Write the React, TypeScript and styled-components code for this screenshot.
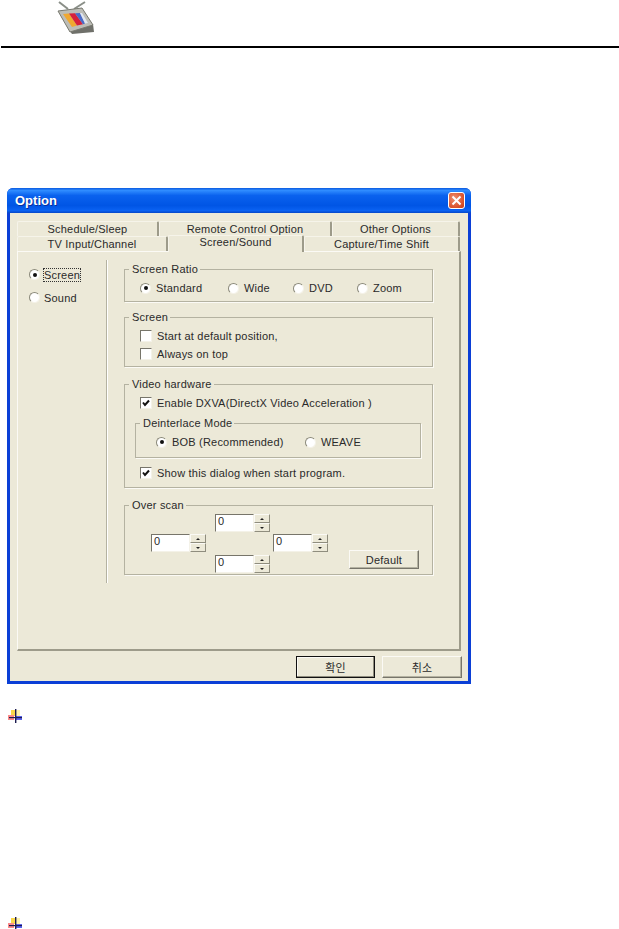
import React from 'react';
import styled, { createGlobalStyle } from 'styled-components';

const FACE = '#ece9d8';

const GlobalStyle = createGlobalStyle`
  html, body {
    margin: 0;
    padding: 0;
    background: #fff;
  }
  body {
    font-family: "Liberation Sans", Arial, "Noto Sans CJK KR", sans-serif;
    font-size: 11px;
    color: #2a2a2a;
    letter-spacing: 0.2px;
  }
`;

const Page = styled.div`
  width: 619px;
  height: 929px;
  overflow: hidden;
`;

const Header = styled.header`
  height: 46px;
  margin-left: 1px;
  padding-left: 55px;
  border-bottom: 2px solid #000;
`;

const Dialog = styled.section`
  width: 464px;
  height: 496px;
  margin: 140px 0 0 7px;
  box-sizing: border-box;
  display: flex;
  flex-direction: column;
  background: #0b3fd6;
  border-radius: 6px 6px 0 0;
  padding: 0 3px 3px;
`;

const TitleBar = styled.div`
  height: 25px;
  flex: none;
  margin: 0 -3px;
  padding: 0 6px 0 8px;
  display: flex;
  align-items: center;
  justify-content: space-between;
  border-radius: 6px 6px 0 0;
  background: linear-gradient(180deg, #0a5ae0 0%, #2f8cff 10%, #0a62ee 30%, #0055e5 70%, #0a62f2 90%, #0647c8 100%);
`;

const Title = styled.span`
  color: #fff;
  font-size: 13px;
  font-weight: bold;
  letter-spacing: 0;
  text-shadow: 1px 1px 0 #0a2f9c;
`;

const CloseButton = styled.span`
  width: 17px;
  height: 17px;
  display: flex;
  align-items: center;
  justify-content: center;
  box-sizing: border-box;
  border: 1px solid #fff;
  border-radius: 3px;
  background: radial-gradient(circle at 35% 35%, #ef8f70, #d9512a 70%, #c23a18);
`;

const Client = styled.div`
  flex: 1;
  background: ${FACE};
  padding: 7px 6px 0 7px;
  display: flex;
  flex-direction: column;
`;

const TabRow = styled.div<{ $height: number }>`
  display: flex;
  height: ${(p) => p.$height}px;
  align-items: flex-end;
`;

const Tab = styled.div<{ $width: number; $active?: boolean }>`
  width: ${(p) => p.$width}px;
  height: ${(p) => (p.$active ? 17 : 15)}px;
  box-sizing: border-box;
  text-align: center;
  line-height: ${(p) => (p.$active ? 12 : 14)}px;
  white-space: nowrap;
  background: ${FACE};
  border-right: 2px solid #9d9b8a;
  border-top: 1px solid #f6f4ea;
  border-left: 1px solid #f6f4ea;
  border-radius: 2px 2px 0 0;
  position: relative;
  ${(p) => p.$active && 'margin-bottom: -1px; z-index: 1;'}
`;

const Panel = styled.div`
  height: 400px;
  width: 444px;
  box-sizing: border-box;
  display: flex;
  border-top: 1px solid #fbfaf5;
  border-left: 1px solid #fbfaf5;
  border-right: 2px solid #9d9b8a;
  border-bottom: 2px solid #9d9b8a;
`;

const SideColumn = styled.div`
  width: 89px;
  height: 323px;
  margin-top: 8px;
  flex: none;
  box-sizing: border-box;
  border-right: 1px solid #b4b2a1;
  box-shadow: 1px 0 0 #fff;
  padding: 3px 0 0 11px;
`;

const SideItem = styled.div`
  height: 23px;
  display: flex;
  align-items: center;
  gap: 4px;
`;

const FocusLabel = styled.span`
  outline: 1px dotted #333;
  line-height: 12px;
`;

const OptionsColumn = styled.div`
  margin: 17px 0 0 17px;
  width: 309px;
`;

const Group = styled.div<{ $height: number; $gap?: number; $pad?: number }>`
  position: relative;
  box-sizing: border-box;
  height: ${(p) => p.$height}px;
  margin-top: ${(p) => p.$gap ?? 0}px;
  padding: ${(p) => p.$pad ?? 9}px 0 0 15px;
  border: 1px solid #b4b2a1;
  box-shadow: 1px 1px 0 #fbfaf5;
`;

const NestedGroup = styled(Group)`
  width: 286px;
  margin-left: -5px;
  padding-left: 20px;
`;

const GroupLabel = styled.span`
  position: absolute;
  top: -8px;
  left: 4px;
  padding: 0 2px 0 3px;
  background: ${FACE};
  line-height: 14px;
  white-space: nowrap;
`;

const RadioRow = styled.div`
  display: flex;
  height: 18px;
`;

const ShowRow = styled.div`
  margin-top: 6px;
`;

const Choice = styled.label<{ $width?: number }>`
  display: flex;
  align-items: center;
  height: 18px;
  gap: 5px;
  white-space: nowrap;
  ${(p) => p.$width && `width: ${p.$width}px;`}
`;

const RadioDot = styled.span<{ $on?: boolean }>`
  width: 11px;
  height: 11px;
  flex: none;
  display: flex;
  align-items: center;
  justify-content: center;
  box-sizing: border-box;
  border-radius: 50%;
  background: #fff;
  border: 1px solid;
  border-color: #8b897a #f4f2e8 #f4f2e8 #8b897a;
  &::after {
    content: '';
    width: 4px;
    height: 4px;
    border-radius: 50%;
    background: ${(p) => (p.$on ? '#111' : 'transparent')};
  }
`;

const CheckBox = styled.span`
  width: 12px;
  height: 12px;
  flex: none;
  display: flex;
  box-sizing: border-box;
  background: #fff;
  border: 1px solid;
  border-color: #77756a #f4f2e8 #f4f2e8 #77756a;
`;

const ScanGrid = styled.div`
  display: grid;
  grid-template-columns: 64px 58px 76px 70px;
  grid-template-rows: 20px 21px 19px;
  margin: -1px 0 0 11px;
`;

const SpinBox = styled.div<{ $col: number; $row: number }>`
  grid-column: ${(p) => p.$col};
  grid-row: ${(p) => p.$row};
  width: 55px;
  height: 18px;
  display: flex;
  align-self: start;
`;

const SpinInput = styled.div`
  width: 39px;
  box-sizing: border-box;
  background: #fff;
  border: 1px solid;
  border-color: #77756a #f4f2e8 #f4f2e8 #77756a;
  padding-left: 2px;
  line-height: 13px;
`;

const SpinArrows = styled.div`
  width: 16px;
  display: flex;
  flex-direction: column;
`;

const SpinArrow = styled.div<{ $down?: boolean }>`
  flex: 1;
  box-sizing: border-box;
  display: flex;
  align-items: center;
  justify-content: center;
  background: ${FACE};
  border-top: 1px solid #fbfaf5;
  border-left: 1px solid #fbfaf5;
  border-right: 1px solid #8f8d7e;
  border-bottom: 1px solid #8f8d7e;
  &::after {
    content: '';
    border-left: 2px solid transparent;
    border-right: 2px solid transparent;
    ${(p) => (p.$down ? 'border-top: 2px solid #222;' : 'border-bottom: 2px solid #222;')}
  }
`;

const PushButton = styled.div<{ $width: number; $height?: number; $isDefault?: boolean }>`
  width: ${(p) => p.$width}px;
  height: ${(p) => p.$height ?? 19}px;
  box-sizing: border-box;
  display: flex;
  align-items: center;
  justify-content: center;
  background: ${FACE};
  border: 1px solid;
  border-color: ${(p) => (p.$isDefault ? '#111' : '#fbfaf5 #77756a #77756a #fbfaf5')};
  box-shadow: ${(p) => (p.$isDefault ? 'inset -1px -1px 0 #8f8d7e, inset 1px 1px 0 #fbfaf5' : 'inset -1px -1px 0 #b4b2a1')};
`;

const ScanDefault = styled(PushButton)`
  grid-column: 4;
  grid-row: 2 / 4;
  align-self: end;
  margin-bottom: 5px;
`;

const Footer = styled.div`
  display: flex;
  justify-content: flex-end;
  gap: 7px;
  margin-top: 5px;
`;

const KoreanLabel = styled.span`
  font-family: "Noto Sans CJK KR", sans-serif;
  font-size: 11px;
`;

const BulletIcon = styled.svg<{ $top: number }>`
  display: block;
  margin: ${(p) => p.$top}px 0 0 8px;
`;

const Radio = ({ on, label, width }: { on?: boolean; label: string; width?: number }) => (
  <Choice $width={width}>
    <RadioDot $on={on} />
    {label}
  </Choice>
);

const Check = ({ on, children }: { on?: boolean; children: React.ReactNode }) => (
  <Choice>
    <CheckBox>
      {on && (
        <svg width="10" height="10" viewBox="0 0 10 10">
          <path d="M2 4.5 L4 7 L8 2.5" fill="none" stroke="#111" strokeWidth="2" />
        </svg>
      )}
    </CheckBox>
    {children}
  </Choice>
);

const Spin = ({ col, row }: { col: number; row: number }) => (
  <SpinBox $col={col} $row={row}>
    <SpinInput>0</SpinInput>
    <SpinArrows>
      <SpinArrow />
      <SpinArrow $down />
    </SpinArrows>
  </SpinBox>
);

const Bullet = ({ top }: { top: number }) => (
  <BulletIcon $top={top} width="14" height="14" viewBox="0 0 14 14">
    <rect x="3" y="1" width="4" height="6" fill="#fbd84a" />
    <rect x="8" y="1" width="4" height="6" fill="#fdf3b0" />
    <rect x="0" y="6" width="6" height="5" fill="#fb8a8a" />
    <rect x="8" y="7" width="6" height="4" fill="#5a62f0" />
    <rect x="7" y="0" width="1.4" height="14" fill="#1c1c50" />
    <rect x="1" y="8" width="13" height="1.2" fill="#1c1c50" />
  </BulletIcon>
);

const TvIcon = () => (
  <svg width="40" height="36" viewBox="0 0 40 36">
    <path d="M3 2 L12 9 M29 2 L18 9" stroke="#8a8f88" strokeWidth="2" fill="none" />
    <path d="M14 31 L37 24 L38 32 L16 34 Z" fill="#6f706a" />
    <path d="M2 11 L26 8 L37 25 L14 32 Z" fill="#bdbdb6" stroke="#77786f" strokeWidth="1" />
    <path d="M7 14 L13 13.4 L21 25.6 L16 27 Z" fill="#f0a830" />
    <path d="M13 13.4 L19 13.2 L27 24.2 L21 25.6 Z" fill="#d6203a" />
    <path d="M19 13.2 L24 13 L29 23.6 L27 24.2 Z" fill="#4a6ac8" />
    <path d="M24 13 L26 13 L32 23 L29 23.6 Z" fill="#dfe6f2" />
  </svg>
);

export default function App() {
  return (
    <Page>
      <GlobalStyle />
      <Header>
        <TvIcon />
      </Header>
      <Dialog>
        <TitleBar>
          <Title>Option</Title>
          <CloseButton>
            <svg width="11" height="11" viewBox="0 0 11 11">
              <path d="M1.5 1.5 L9.5 9.5 M9.5 1.5 L1.5 9.5" stroke="#fff" strokeWidth="2" />
            </svg>
          </CloseButton>
        </TitleBar>
        <Client>
          <TabRow $height={16}>
            <Tab $width={142}>Schedule/Sleep</Tab>
            <Tab $width={173}>Remote Control Option</Tab>
            <Tab $width={128}>Other Options</Tab>
          </TabRow>
          <TabRow $height={15}>
            <Tab $width={151}>TV Input/Channel</Tab>
            <Tab $width={136} $active>Screen/Sound</Tab>
            <Tab $width={156}>Capture/Time Shift</Tab>
          </TabRow>
          <Panel>
            <SideColumn>
              <SideItem>
                <RadioDot $on />
                <FocusLabel>Screen</FocusLabel>
              </SideItem>
              <SideItem>
                <RadioDot />
                Sound
              </SideItem>
            </SideColumn>
            <OptionsColumn>
              <Group $height={33}>
                <GroupLabel>Screen Ratio</GroupLabel>
                <RadioRow>
                  <Radio on label="Standard" width={88} />
                  <Radio label="Wide" width={65} />
                  <Radio label="DVD" width={64} />
                  <Radio label="Zoom" />
                </RadioRow>
              </Group>
              <Group $height={50} $gap={15}>
                <GroupLabel>Screen</GroupLabel>
                <Check>Start at default position,</Check>
                <Check>Always on top</Check>
              </Group>
              <Group $height={104} $gap={17}>
                <GroupLabel>Video hardware</GroupLabel>
                <Check on>Enable DXVA(DirectX Video Acceleration )</Check>
                <NestedGroup $height={35} $gap={11}>
                  <GroupLabel>Deinterlace Mode</GroupLabel>
                  <RadioRow>
                    <Radio on label="BOB (Recommended)" width={149} />
                    <Radio label="WEAVE" />
                  </RadioRow>
                </NestedGroup>
                <ShowRow>
                  <Check on>Show this dialog when start program.</Check>
                </ShowRow>
              </Group>
              <Group $height={70} $gap={17}>
                <GroupLabel>Over scan</GroupLabel>
                <ScanGrid>
                  <Spin col={2} row={1} />
                  <Spin col={1} row={2} />
                  <Spin col={3} row={2} />
                  <Spin col={2} row={3} />
                  <ScanDefault $width={70}>Default</ScanDefault>
                </ScanGrid>
              </Group>
            </OptionsColumn>
          </Panel>
          <Footer>
            <PushButton $width={79} $height={22} $isDefault>
              <KoreanLabel>확인</KoreanLabel>
            </PushButton>
            <PushButton $width={80} $height={22}>
              <KoreanLabel>취소</KoreanLabel>
            </PushButton>
          </Footer>
        </Client>
      </Dialog>
      <Bullet top={25} />
      <Bullet top={194} />
    </Page>
  );
}
